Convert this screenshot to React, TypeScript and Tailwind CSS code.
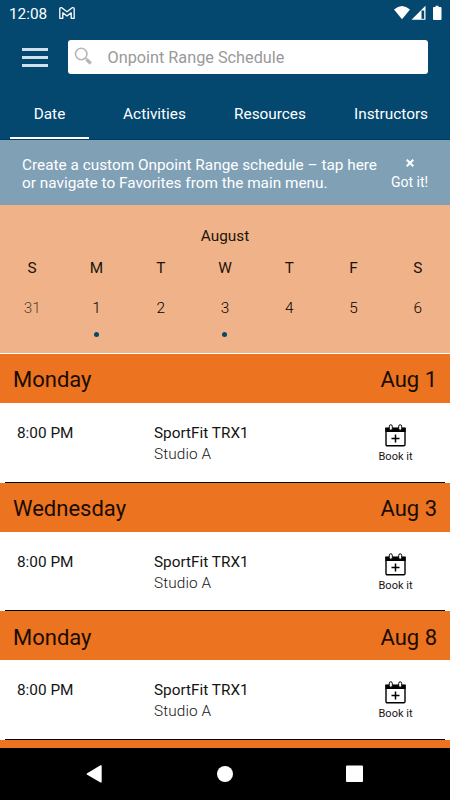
import React from 'react';

interface ClassGroup {
  day: string;
  date: string;
  time: string;
  title: string;
  location: string;
}

const TABS = [
  { label: 'Date', width: 'w-[99px]' },
  { label: 'Activities', width: 'w-[111px]' },
  { label: 'Resources', width: 'w-[120px]' },
  { label: 'Instructors', width: 'w-[122px]' },
];

const WEEK = [
  { letter: 'S', day: 31, muted: true },
  { letter: 'M', day: 1, hasClass: true },
  { letter: 'T', day: 2 },
  { letter: 'W', day: 3, hasClass: true },
  { letter: 'T', day: 4 },
  { letter: 'F', day: 5 },
  { letter: 'S', day: 6 },
];

const GROUPS: ClassGroup[] = [
  { day: 'Monday', date: 'Aug 1', time: '8:00 PM', title: 'SportFit TRX1', location: 'Studio A' },
  { day: 'Wednesday', date: 'Aug 3', time: '8:00 PM', title: 'SportFit TRX1', location: 'Studio A' },
  { day: 'Monday', date: 'Aug 8', time: '8:00 PM', title: 'SportFit TRX1', location: 'Studio A' },
];

const StatusBar: React.FC = () => (
  <div className="flex h-7 items-center pl-[9px] pr-[7px] text-white">
    <span className="w-[50px] pt-[2px] text-[15.35px] leading-none">12:08</span>
    <svg width="16" height="12" viewBox="0 0 16 12" className="-mt-[2px]" fill="none" stroke="currentColor" strokeWidth="1.3" strokeLinejoin="round">
      <path d="M.8 11.300V2Q.8.700 2 .7h.8L8 4.800 13.200.7h.8q1.200 0 1.200 1.300v9.300h-3V5.800L8 9 3.800 5.800v5.500z" />
    </svg>
    <div className="flex-1" />
    <svg width="49" height="16" viewBox="0 0 49 16" className="-mt-[2px]" fill="currentColor">
      <path d="M0 4.500Q8-2.500 16 4.500L8 14.300z" />
      <path d="M31.500.8V14.800H17.500z" />
      <path d="M27.500 5.500h2.700v8.300h-2.700z" fill="#04476f" />
      <path d="M39 2.600Q39 2 40 2h1.500V.8h3V2H46.500q1 0 1 1v11q0 1-1 1h-6.500q-1 0-1-1z" />
    </svg>
  </div>
);

const SearchBar: React.FC = () => (
  <div className="flex h-[60px] items-center pl-[22px] pr-[22px]">
    <button className="-mt-[2px] flex w-[26px] flex-col gap-[5px]" aria-label="Menu">
      <span className="h-[3px] bg-[#cfdfeb]" />
      <span className="h-[3px] bg-[#cfdfeb]" />
      <span className="h-[3px] bg-[#cfdfeb]" />
    </button>
    <div className="-mt-[2px] ml-5 flex h-[34px] flex-1 items-center rounded-[3px] bg-white pl-[6px]">
      <svg width="19" height="19" viewBox="0 0 19 19" className="-mt-px" fill="none" stroke="#b5b5b5">
        <circle cx="7.200" cy="7" r="5.700" strokeWidth="1.600" />
        <path d="M11.300 11l1.500 1.500" strokeWidth="1.600" />
        <path d="M12.500 12.300l4.300 4.200" strokeWidth="3.200" />
      </svg>
      <span className="ml-[14.5px] pt-[3px] text-[16.25px] text-[#999]">Onpoint Range Schedule</span>
    </div>
  </div>
);

const Tabs: React.FC = () => (
  <nav className="flex h-[52px] w-[452px] border-b border-[#023a63] text-[15.35px] text-white">
    {TABS.map((tab, i) => (
      <div key={tab.label} className={`${tab.width} flex shrink-0 flex-col items-center`}>
        <span className="flex-1 pt-[14px] leading-[24px]">{tab.label}</span>
        {i === 0 && <span className="h-[2px] w-[79px] bg-white" />}
      </div>
    ))}
  </nav>
);

const Banner: React.FC = () => (
  <div className="flex h-[65px] items-start bg-[#80a0b6] pl-[22px] pt-[15px] text-white">
    <p className="w-[364px] pt-px text-[15.35px] leading-[18px]">
      Create a custom Onpoint Range schedule – tap here
      <br />
      or navigate to Favorites from the main menu.
    </p>
    <div className="flex w-[47px] flex-col items-center">
      <svg className="mt-[4px]" width="8" height="8" viewBox="0 0 8 8" stroke="currentColor" strokeWidth="2">
        <path d="M.7.7l6.600 6.600M7.300.7L.7 7.300" />
      </svg>
      <span className="mt-[6px] whitespace-nowrap text-[14px] leading-[18px]">Got it!</span>
    </div>
  </div>
);

const Calendar: React.FC = () => (
  <section className="h-[149px] border-b border-white bg-[#f0b389] pt-[21px] text-[15.35px] text-[#1c130c]">
    <h2 className="text-center leading-[20px]">August</h2>
    <div className="mt-3 grid grid-cols-7">
      {WEEK.map(({ letter, day, muted, hasClass }) => (
        <div key={day} className="flex flex-col items-center leading-[20px]">
          <span>{letter}</span>
          <span className={`mt-5 font-light ${muted ? 'opacity-75' : 'text-black'}`}>{day}</span>
          {hasClass && <span className="mt-[14px] size-[5px] rounded-full bg-[#04476f]" />}
        </div>
      ))}
    </div>
  </section>
);

const BookIcon: React.FC = () => (
  <svg width="21" height="23" viewBox="0 0 21 23" fill="none">
    <path d="M1 4.500h19v16q0 1.200-1.200 1.200H2.200Q1 21.700 1 20.500z" stroke="black" strokeWidth="1.400" />
    <path d="M.4 3.600h20.200v4.400H.4z" fill="black" />
    <rect x="4.300" y=".8" width="3" height="5.400" rx="1.500" fill="white" stroke="black" />
    <rect x="13.700" y=".8" width="3" height="5.400" rx="1.500" fill="white" stroke="black" />
    <path d="M10.500 10.500v8M6.500 14.500h8" stroke="black" strokeWidth="1.500" />
  </svg>
);

const DayHeader: React.FC<{ day: string; date: string }> = ({ day, date }) => (
  <div className="flex h-[49px] items-center justify-between bg-[#ec731f] px-[13px] pt-[2.6px] text-[22px] text-[#180c03]">
    <span>{day}</span>
    <span>{date}</span>
  </div>
);

const ClassRow: React.FC<{ group: ClassGroup }> = ({ group }) => (
  <div className="h-[79.7px] bg-white px-[5px]">
    <div className="flex h-full items-start border-b border-black pl-3 pt-[20px] text-[15.35px] leading-[21px] text-[#151515]">
      <span className="w-[137px] shrink-0">{group.time}</span>
      <div className="flex w-[218px] shrink-0 flex-col">
        <span>{group.title}</span>
        <span className="font-light tracking-[0.1px]">{group.location}</span>
      </div>
      <button className="flex w-[47px] shrink-0 flex-col items-center pt-px">
        <BookIcon />
        <span className="pt-px text-[11px] leading-[18px]">Book it</span>
      </button>
    </div>
  </div>
);

const NavBar: React.FC = () => (
  <div className="flex h-[52px] shrink-0 items-center bg-black pl-[86px]">
    <svg width="278" height="18" viewBox="0 0 278 18" fill="white">
      <path d="M1.200 8.200L14.500.3q1.200-.5 1.200.8v15.600q0 1.300-1.200.7L1.200 9.800Q-.1 9 1.200 8.200z" />
      <circle cx="139" cy="9" r="8" />
      <rect x="260" y=".5" width="17" height="16.500" rx="1" />
    </svg>
  </div>
);

const App: React.FC = () => {
  return (
    <div className="flex h-[800px] w-[450px] flex-col overflow-hidden bg-white font-['Roboto',sans-serif]">
      <header className="shrink-0 overflow-hidden bg-[#04476f]">
        <StatusBar />
        <SearchBar />
        <Tabs />
      </header>
      <main className="min-h-0 flex-1 overflow-hidden">
        <Banner />
        <Calendar />
        {GROUPS.map(group => (
          <React.Fragment key={group.date}>
            <DayHeader day={group.day} date={group.date} />
            <ClassRow group={group} />
          </React.Fragment>
        ))}
        <div className="h-[49px] bg-[#ec731f]" />
      </main>
      <NavBar />
    </div>
  );
};

export default App;
